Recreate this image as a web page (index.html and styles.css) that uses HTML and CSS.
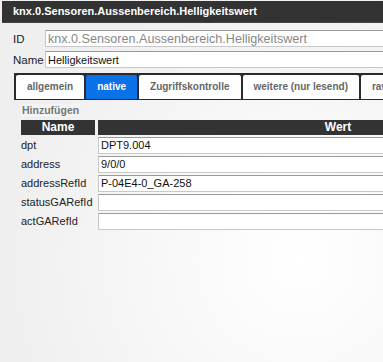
FILE: index.html
```html
<!DOCTYPE html>
<html lang="de">
<head>
  <meta charset="UTF-8">
  <title>knx.0.Sensoren.Aussenbereich.Helligkeitswert</title>
  <link rel="stylesheet" href="styles.css">
</head>
<body>
  <div class="dialog">
    <div class="titlebar">knx.0.Sensoren.Aussenbereich.Helligkeitswert</div>
    <div class="dialog-content">
      <div class="field">
        <label>ID</label>
        <input type="text" class="readonly" value="knx.0.Sensoren.Aussenbereich.Helligkeitswert" readonly>
      </div>
      <div class="field">
        <label>Name</label>
        <input type="text" value="Helligkeitswert">
      </div>
      <ul class="tabs">
        <li>allgemein</li>
        <li class="active">native</li>
        <li>Zugriffskontrolle</li>
        <li>weitere (nur lesend)</li>
        <li>raw</li>
      </ul>
      <div class="native-panel">
        <button class="add-btn">Hinzufügen</button>
        <table class="native-table">
          <thead>
            <tr><th class="col-name">Name</th><th class="col-value">Wert</th></tr>
          </thead>
          <tbody>
            <tr><td>dpt</td><td><input type="text" value="DPT9.004"></td></tr>
            <tr><td>address</td><td><input type="text" value="9/0/0"></td></tr>
            <tr><td>addressRefId</td><td><input type="text" value="P-04E4-0_GA-258"></td></tr>
            <tr><td>statusGARefId</td><td><input type="text" value=""></td></tr>
            <tr><td>actGARefId</td><td><input type="text" value=""></td></tr>
          </tbody>
        </table>
      </div>
    </div>
  </div>
</body>
</html>
```

FILE: styles.css
```css
html, body {
  margin: 0;
  padding: 0;
  height: 100%;
  overflow: hidden;
}
body {
  font-family: 'Liberation Sans', Arial, sans-serif;
  background: radial-gradient(circle at 300px 260px, #ffffff 0%, #f8f8f8 35%, #efefef 75%);
  color: #222;
}
.dialog {
  margin: 1px 0 0 2px;
  width: 700px;
}
.titlebar {
  height: 21px;
  line-height: 21px;
  background-color: #333;
  color: #fff;
  font-size: 11px;
  font-weight: bold;
  padding-left: 11px;
  border-bottom: 1px solid #444;
}
.dialog-content {
  padding: 5px 0 0 11px;
}
.field {
  display: flex;
  align-items: center;
  height: 21px;
}
.field label {
  width: 32px;
  font-size: 11.5px;
  color: #222;
}
.field input {
  width: 500px;
}
input[type="text"] {
  box-sizing: border-box;
  height: 17px;
  margin: 0;
  padding: 0 2px;
  font-family: 'Liberation Sans', Arial, sans-serif;
  font-size: 11px;
  color: #111;
  background: #fff;
  border: 1px solid #c8c8c8;
  border-top-color: #9a9a9a;
  border-radius: 0;
  outline: none;
}
.field input.readonly {
  color: #888;
  font-size: 12.6px;
}
.tabs {
  list-style: none;
  display: flex;
  gap: 2px;
  margin: 3px 0 0 1px;
  padding: 2px 0 1px 2px;
  background-color: #2b2b2b;
  height: 24px;
}
.tabs li {
  background: #fff;
  color: #666;
  font-size: 10px;
  font-weight: bold;
  line-height: 24px;
  padding: 0 11px;
  border-radius: 2px 2px 0 0;
  white-space: nowrap;
}
.tabs li.active {
  background: #0a72e8;
  color: #fff;
}
.native-panel {
  padding: 4px 0 0 8px;
}
.add-btn {
  display: block;
  font-family: 'Liberation Sans', Arial, sans-serif;
  font-size: 10.5px;
  font-weight: bold;
  color: #777;
  background: #f4f4f4;
  border: none;
  padding: 0 1px;
  height: 13px;
  line-height: 13px;
  margin: 0;
}
.native-table {
  border-collapse: separate;
  border-spacing: 3px 2.4px;
  margin: 0.6px 0 0 -3px;
  font-size: 11px;
}
.native-table th {
  background-color: #333;
  color: #fff;
  font-size: 12px;
  font-weight: bold;
  height: 15px;
  padding: 0;
  line-height: 15px;
}
.col-name {
  width: 74px;
}
.col-value {
  width: 480px;
}
.native-table td {
  padding: 0;
  height: 17px;
  white-space: nowrap;
  color: #222;
}
.native-table td input {
  width: 100%;
  display: block;
}
```
